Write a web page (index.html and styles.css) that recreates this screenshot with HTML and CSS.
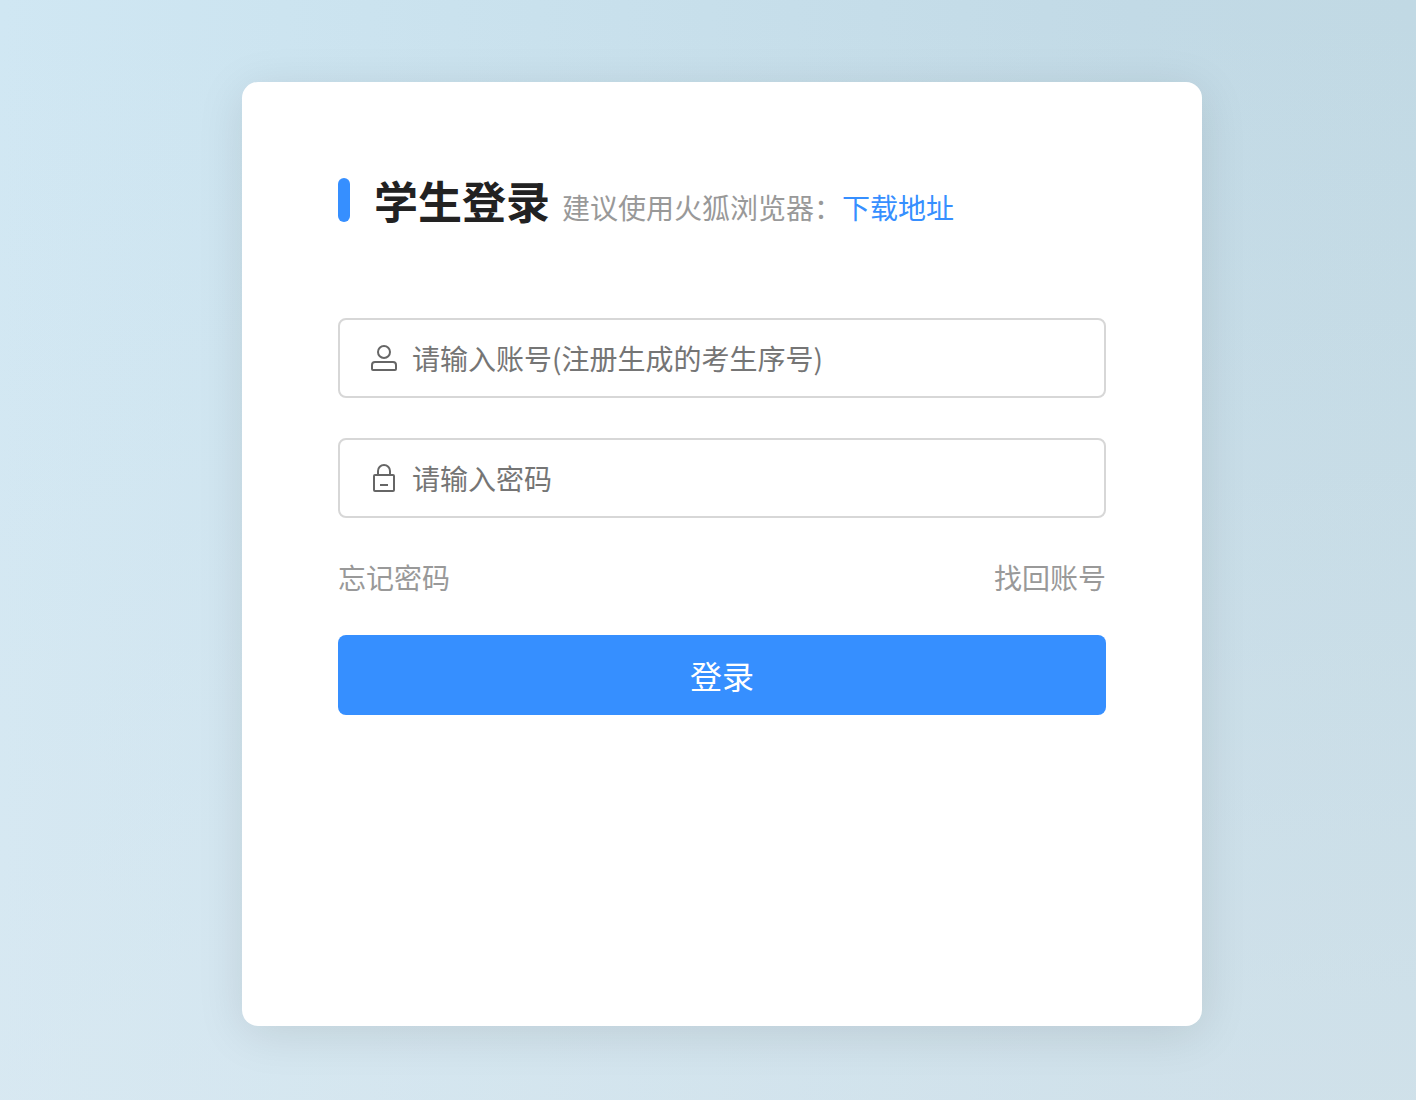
FILE: index.html
```html
<!DOCTYPE html>
<html lang="zh-CN">
<head>
  <meta charset="UTF-8">
  <meta name="viewport" content="width=device-width, initial-scale=1.0">
  <title>学生登录</title>
  <link rel="stylesheet" href="styles.css">
</head>
<body>
  <main class="login-card">
    <header class="login-header">
      <h1>学生登录</h1>
      <p>建议使用火狐浏览器：<a href="#">下载地址</a></p>
    </header>
    <form class="login-form">
      <label class="field">
        <svg viewBox="0 0 28 28" aria-hidden="true">
          <circle cx="14" cy="8" r="6"/>
          <path d="M2 25V21Q2 18 5 18H23Q26 18 26 21V25Q26 26 25 26H3Q2 26 2 25Z"/>
        </svg>
        <input type="text" name="username" placeholder="请输入账号(注册生成的考生序号)" aria-label="账号">
      </label>
      <label class="field">
        <svg viewBox="0 0 28 28" aria-hidden="true">
          <rect x="4" y="11" width="20" height="16" rx="1"/>
          <path d="M8 11V7a6 6 0 0 1 12 0V11M10 21H18"/>
        </svg>
        <input type="password" name="password" placeholder="请输入密码" aria-label="密码">
      </label>
      <div class="links">
        <a href="#">忘记密码</a>
        <a href="#">找回账号</a>
      </div>
      <button type="submit">登录</button>
    </form>
  </main>
</body>
</html>
```
FILE: styles.css
```css
* { margin: 0; padding: 0; box-sizing: border-box; }
body {
  min-height: 100vh;
  padding: 82px 0 74px 28px;
  display: flex;
  justify-content: center;
  font-family: "Noto Sans CJK SC", sans-serif;
  font-size: 28px;
  color: #222;
  background:
    linear-gradient(to bottom, rgba(225, 234, 240, 0), rgba(225, 234, 240, 0.45)),
    linear-gradient(to right, #d0e7f3, #cce4f0 20%, #c2dae6 80%, #c1d9e4);
}
a { text-decoration: none; }

.login-card {
  width: 100%;
  max-width: 960px;
  padding: 96px;
  background: #fff;
  border-radius: 16px;
  box-shadow: 0 8px 48px rgba(0, 0, 0, 0.1);
}

.login-header {
  display: flex;
  align-items: baseline;
  gap: 12px;
  height: 44px;
  margin-bottom: 96px;
  line-height: 44px;
}
.login-header::before {
  content: "";
  align-self: stretch;
  width: 12px;
  margin-right: 12px;
  border-radius: 6px;
  background: #368fff;
}
.login-header h1 { font-size: 44px; }
.login-header p { color: #999; }
.login-header a { color: #368fff; }

/* Form */
.field {
  display: flex;
  align-items: center;
  gap: 14px;
  height: 80px;
  margin-bottom: 40px;
  padding: 0 30px;
  border: 2px solid #d7d7d7;
  border-radius: 8px;
}
.field:focus-within { border-color: #368fff; }
.field svg {
  flex: none;
  width: 28px;
  height: 28px;
  fill: none;
  stroke: #666;
  stroke-width: 2;
}
.field input {
  flex: 1;
  min-width: 0;
  height: 72px;
  border: none;
  outline: none;
  background: none;
  font: inherit;
  color: #222;
}
.field input::placeholder { color: #757575; }
.links {
  display: flex;
  justify-content: space-between;
  margin-bottom: 39px;
  line-height: 38px;
}
.links a { color: #999; }
button {
  width: 100%;
  height: 80px;
  border: none;
  border-radius: 8px;
  background: #368fff;
  color: #fff;
  font-family: inherit;
  font-size: 32px;
  cursor: pointer;
}
```
